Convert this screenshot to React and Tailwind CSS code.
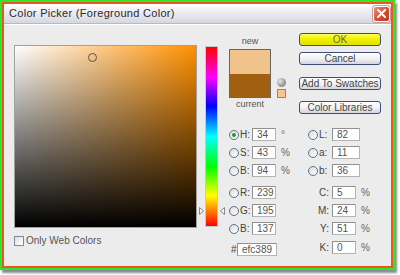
import React from "react";

function Radio({ on }) {
  return (
    <div className="w-[10px] h-[10px] rounded-full border border-[#5a6f94] bg-[linear-gradient(135deg,#dcdcd6,#ffffff)] flex items-center justify-center shrink-0">
      {on && <div className="w-[4px] h-[4px] rounded-full bg-[#21a121]" />}
    </div>
  );
}

function Box({ v, w }) {
  return (
    <div
      className={`${w} h-[13px] bg-white border border-[#b4b4b4] border-t-[#909090] border-l-[#909090] text-[10px] leading-[11px] pl-[4px] text-[#555] shrink-0`}
    >
      {v}
    </div>
  );
}

function LRow({ label, v, unit, on, cls }) {
  return (
    <div className={`flex items-center h-[13px] ${cls || ""}`}>
      <Radio on={on} />
      <div className="w-[13px] pl-[1px] text-[10px] leading-[11px] text-[#444]">{label}</div>
      <Box v={v} w="w-[24px]" />
      <div className="ml-[5px] text-[10px] leading-[11px] text-[#666]">{unit}</div>
    </div>
  );
}

function LabRow({ label, v, cls }) {
  return (
    <div className={`flex items-center h-[13px] ${cls || ""}`}>
      <Radio />
      <div className="w-[14px] pl-[1px] text-[10px] leading-[11px] text-[#444]">{label}</div>
      <Box v={v} w="w-[28px]" />
    </div>
  );
}

function CRow({ label, v, cls }) {
  return (
    <div className={`flex items-center h-[13px] ${cls || ""}`}>
      <div className="w-[24px] pr-[3px] text-right text-[10px] leading-[11px] text-[#444]">{label}</div>
      <Box v={v} w="w-[24px]" />
      <div className="ml-[5px] text-[10px] leading-[11px] text-[#666]">%</div>
    </div>
  );
}

function Btn({ children, yellow, cls }) {
  return (
    <div
      className={`h-[13px] w-[82px] rounded-[3px] border border-[#3d4d73] flex items-center justify-center text-[10px] leading-[11px] text-[#444] ${
        yellow
          ? "bg-[linear-gradient(to_bottom,#ffff60,#f2f200_40%,#e0e000)] text-[#666]"
          : "bg-[linear-gradient(to_bottom,#ffffff,#f2f2f6_50%,#d4d4e0)]"
      } ${cls || ""}`}
    >
      {children}
    </div>
  );
}

function Tri({ dir }) {
  return (
    <svg width="5" height="8" viewBox="0 0 5 8">
      {dir === "right" ? (
        <path d="M0.5 0.5 L4.5 4 L0.5 7.5 Z" fill="#f4f4f4" stroke="#888" strokeWidth="1" />
      ) : (
        <path d="M4.5 0.5 L0.5 4 L4.5 7.5 Z" fill="#f4f4f4" stroke="#888" strokeWidth="1" />
      )}
    </svg>
  );
}

export default function App() {
  return (
    <div className="w-[400px] h-[275px] bg-white font-['Liberation_Sans',Arial,sans-serif]">
      <div className="w-[395px] h-[270px] border-2 border-[#2fe62f] shadow-[2px_3px_2px_rgba(0,0,0,0.45)]">
        <div className="w-full h-full border-2 border-[#f0561c] flex flex-col bg-[#ececec]">
          {/* title bar */}
          <div className="h-[20px] flex items-center justify-between bg-[linear-gradient(to_bottom,#ffffff,#eeeef2_40%,#d6d6e0)] border-b border-[#b8b8c8]">
            <div className="pl-[5px] text-[11px] text-[#2a2a2a] tracking-[0.3px]">Color Picker (Foreground Color)</div>
            <div className="mr-[1px] w-[17px] h-[16px] rounded-[3px] border border-white bg-[linear-gradient(135deg,#ec8b78,#d44a30_60%,#c0351f)] flex items-center justify-center shadow-[0_0_0_1px_#c0a0a0]">
              <svg width="9" height="9" viewBox="0 0 9 9">
                <path d="M1 1 L8 8 M8 1 L1 8" stroke="white" strokeWidth="2" strokeLinecap="round" />
              </svg>
            </div>
          </div>

          {/* body */}
          <div className="flex flex-1 border-t border-white">
            {/* colour field */}
            <div className="ml-[10px] mt-[20px]">
              <div className="relative w-[183px] h-[183px] border border-[#a0a0a0] bg-[linear-gradient(to_top,#000,transparent),linear-gradient(to_right,#fff,#ff9000)]">
                <div className="absolute left-[73px] top-[7px] w-[9px] h-[9px] rounded-full border border-[#555]" />
              </div>
              <div className="mt-[7px] flex items-center">
                <div className="w-[10px] h-[10px] border border-[#7a8aa8] bg-[linear-gradient(135deg,#e0e0da,#ffffff)]" />
                <div className="ml-[2px] text-[10px] leading-[11px] text-[#555]">Only Web Colors</div>
              </div>
            </div>

            {/* hue slider */}
            <div className="ml-[8px] mt-[21px] relative">
              <div className="w-[13px] h-[181px] border border-[#c8c8c8] bg-[linear-gradient(to_bottom,#f00,#f0f_17%,#00f_33%,#0ff_50%,#0f0_67%,#ff0_83%,#f00)]" />
              <div className="absolute left-[-6px] top-[161px] flex">
                <Tri dir="right" />
              </div>
              <div className="absolute left-[15px] top-[161px] flex">
                <Tri dir="left" />
              </div>
            </div>

            {/* right area */}
            <div className="ml-[11px] w-[160px] flex flex-col">
              <div className="flex">
                <div className="w-[42px] mt-[10px] flex flex-col items-center">
                  <div className="h-[12px] text-[9px] leading-[12px] text-[#555]">new</div>
                  <div className="mt-[2px] w-[42px] h-[49px] border border-[#666] flex flex-col">
                    <div className="flex-1 bg-[#efc389]" />
                    <div className="flex-1 bg-[#a1600f]" />
                  </div>
                  <div className="h-[12px] text-[9px] leading-[12px] text-[#555]">current</div>
                </div>
                <div className="ml-[6px] mt-[53px] flex flex-col">
                  <div className="w-[9px] h-[9px] rounded-full bg-[radial-gradient(circle_at_35%_35%,#e8e8e8,#8a8a8a_70%,#666)]" />
                  <div className="mt-[2px] w-[9px] h-[9px] border border-[#888] bg-[#f8c58c]" />
                </div>
                <div className="ml-[13px] mt-[8px] flex flex-col">
                  <Btn yellow>OK</Btn>
                  <Btn cls="mt-[6px]">Cancel</Btn>
                  <Btn cls="mt-[12px]">Add To Swatches</Btn>
                  <Btn cls="mt-[11px]">Color Libraries</Btn>
                </div>
              </div>

              <div className="mt-[14px] flex">
                <div className="w-[79px] flex flex-col">
                  <LRow label="H:" v="34" unit="°" on />
                  <LRow label="S:" v="43" unit="%" cls="mt-[5px]" />
                  <LRow label="B:" v="94" unit="%" cls="mt-[5px]" />
                  <LRow label="R:" v="239" cls="mt-[9px]" />
                  <LRow label="G:" v="195" cls="mt-[5px]" />
                  <LRow label="B:" v="137" cls="mt-[5px]" />
                  <div className="mt-[8px] flex items-center h-[13px]">
                    <div className="w-[8px] pl-[2px] text-[10px] leading-[11px] text-[#444]">#</div>
                    <Box v="efc389" w="w-[40px]" />
                  </div>
                </div>
                <div className="flex flex-col">
                  <LabRow label="L:" v="82" />
                  <LabRow label="a:" v="11" cls="mt-[5px]" />
                  <LabRow label="b:" v="36" cls="mt-[5px]" />
                  <CRow label="C:" v="5" cls="mt-[9px]" />
                  <CRow label="M:" v="24" cls="mt-[5px]" />
                  <CRow label="Y:" v="51" cls="mt-[5px]" />
                  <CRow label="K:" v="0" cls="mt-[6px]" />
                </div>
              </div>
            </div>
          </div>
        </div>
      </div>
    </div>
  );
}
